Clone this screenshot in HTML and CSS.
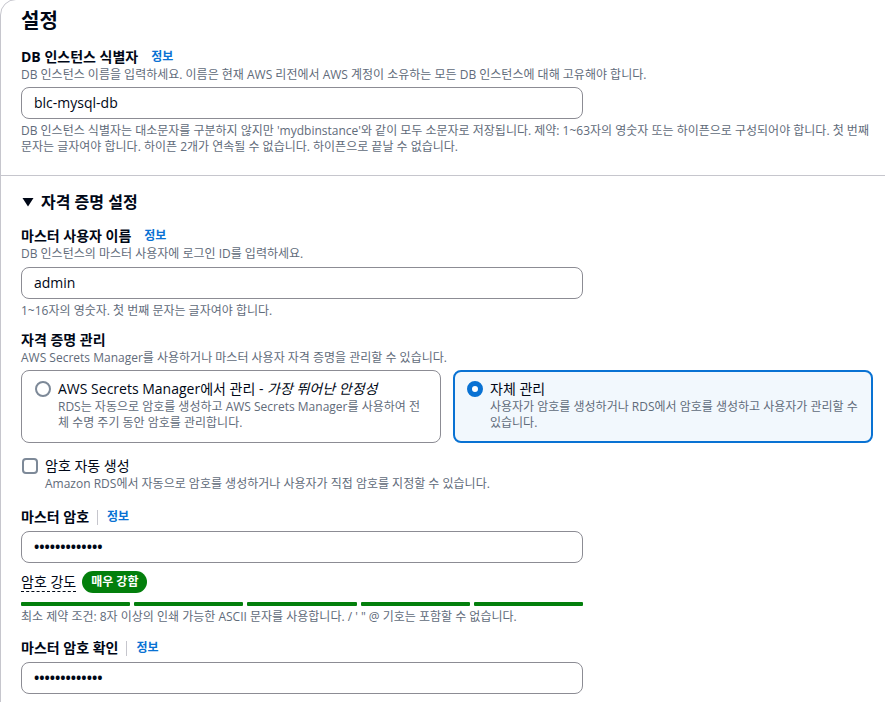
FILE: index.html
```html
<!DOCTYPE html>
<html lang="ko">
<head>
<meta charset="utf-8">
<title>설정</title>
<link rel="stylesheet" href="styles.css">
</head>
<body>
<div class="card">
  <section class="section first">
    <h2 class="title">설정</h2>
    <div class="field f-id">
      <div class="label-row"><span class="label">DB 인스턴스 식별자</span><a class="info spaced">정보</a></div>
      <div class="desc">DB 인스턴스 이름을 입력하세요. 이름은 현재 AWS 리전에서 AWS 계정이 소유하는 모든 DB 인스턴스에 대해 고유해야 합니다.</div>
      <div class="input">blc-mysql-db</div>
      <div class="hint">DB 인스턴스 식별자는 대소문자를 구분하지 않지만 'mydbinstance'와 같이 모두 소문자로 저장됩니다. 제약: 1~63자의 영숫자 또는 하이픈으로 구성되어야 합니다. 첫 번째 문자는 글자여야 합니다. 하이픈 2개가 연속될 수 없습니다. 하이픈으로 끝날 수 없습니다.</div>
    </div>
  </section>
  <section class="section second">
    <h3 class="subtitle"><svg class="caret" width="12" height="10" viewBox="0 0 12 10"><polygon points="0.5,1 11.5,1 6,9.5" fill="#000716"/></svg>자격 증명 설정</h3>
    <div class="field f-user">
      <div class="label-row"><span class="label">마스터 사용자 이름</span><a class="info spaced">정보</a></div>
      <div class="desc">DB 인스턴스의 마스터 사용자에 로그인 ID를 입력하세요.</div>
      <div class="input in-user">admin</div>
      <div class="hint">1~16자의 영숫자. 첫 번째 문자는 글자여야 합니다.</div>
    </div>
    <div class="field f-cred">
      <div class="label-row"><span class="label">자격 증명 관리</span></div>
      <div class="desc">AWS Secrets Manager를 사용하거나 마스터 사용자 자격 증명을 관리할 수 있습니다.</div>
      <div class="tiles">
        <div class="tile">
          <span class="radio"></span>
          <div class="tile-body">
            <div class="tile-title">AWS Secrets Manager에서 관리 - <em>가장 뛰어난 안정성</em></div>
            <div class="tile-desc">RDS는 자동으로 암호를 생성하고 AWS Secrets Manager를 사용하여 전체 수명 주기 동안 암호를 관리합니다.</div>
          </div>
        </div>
        <div class="tile selected">
          <span class="radio checked"></span>
          <div class="tile-body">
            <div class="tile-title">자체 관리</div>
            <div class="tile-desc">사용자가 암호를 생성하거나 RDS에서 암호를 생성하고 사용자가 관리할 수 있습니다.</div>
          </div>
        </div>
      </div>
    </div>
    <div class="check-row">
      <span class="checkbox"></span>
      <div>
        <div class="check-label">암호 자동 생성</div>
        <div class="desc">Amazon RDS에서 자동으로 암호를 생성하거나 사용자가 직접 암호를 지정할 수 있습니다.</div>
      </div>
    </div>
    <div class="field f-pw">
      <div class="label-row"><span class="label">마스터 암호</span><span class="sep"></span><a class="info">정보</a></div>
      <div class="input dots">•••••••••••••</div>
      <div class="strength">
        <span class="strength-label">암호 강도</span>
        <span class="badge">매우 강함</span>
      </div>
      <div class="bars"><span></span><span></span><span></span><span></span><span></span></div>
      <div class="hint tight">최소 제약 조건: 8자 이상의 인쇄 가능한 ASCII 문자를 사용합니다. / ' " @ 기호는 포함할 수 없습니다.</div>
    </div>
    <div class="field f-pw2">
      <div class="label-row"><span class="label">마스터 암호 확인</span><span class="sep"></span><a class="info">정보</a></div>
      <div class="input dots">•••••••••••••</div>
    </div>
  </section>
</div>
</body>
</html>
```

FILE: styles.css
```css
html, body {
  margin: 0;
  padding: 0;
  overflow: hidden;
  background: #ffffff;
}

body {
  font-family: "Open Sans", "Noto Sans CJK KR", sans-serif;
  color: #000716;
  font-size: 14px;
  line-height: 20px;
}

.card {
  width: 1000px;
  margin-top: -1px;
  border: 1px solid #c6c6cd;
  border-radius: 16px;
  background: #ffffff;
}

.section {
  padding: 0 20px;
}

.section.first {
  padding-top: 9px;
  padding-bottom: 20px;
}

.section.second {
  border-top: 1px solid #c6c6cd;
  padding-top: 14px;
  padding-bottom: 40px;
}

.title {
  margin: 0;
  font-size: 20px;
  line-height: 24px;
  font-weight: 700;
}

.subtitle {
  margin: 0;
  font-size: 16px;
  line-height: 24px;
  font-weight: 700;
  display: flex;
  align-items: center;
  gap: 7px;
  padding-left: 1px;
}

.caret {
  display: block;
}

.field {
  width: 562px;
}

.f-id { margin-top: 14px; }
.f-user { margin-top: 12px; }
.f-cred { margin-top: 11px; width: 852px; }
.f-pw { margin-top: 15px; }
.f-pw2 { margin-top: 13px; }

.label-row {
  display: flex;
  align-items: center;
  height: 20px;
}

.label {
  font-weight: 700;
  font-size: 14px;
}

.info {
  color: #0972d3;
  font-weight: 700;
  font-size: 12px;
  text-decoration: none;
}

.info.spaced {
  margin-left: 13px;
}

.sep {
  width: 1px;
  height: 15px;
  background: #c6c6cd;
  margin: 0 9px 0 8px;
}

.desc {
  font-size: 12px;
  line-height: 16px;
  color: #5f6b7a;
  white-space: nowrap;
}

.input {
  box-sizing: border-box;
  height: 32px;
  margin-top: 4px;
  border: 1px solid #8c8c94;
  border-radius: 8px;
  padding: 0 12px;
  font-size: 14px;
  line-height: 30px;
  color: #000716;
}

.in-user { margin-top: 5px; }

.dots {
  font-size: 14px;
  font-weight: 700;
  letter-spacing: 0;
}

.hint {
  margin-top: 4px;
  font-size: 12px;
  line-height: 16px;
  color: #5f6b7a;
}

.f-id .hint {
  width: 858px;
}

.hint.tight {
  margin-top: 3px;
  white-space: nowrap;
}

.tiles {
  margin-top: 4px;
  display: grid;
  grid-template-columns: 1fr 1fr;
  gap: 12px;
}

.tile {
  box-sizing: border-box;
  height: 73px;
  border: 1px solid #8c8c94;
  border-radius: 8px;
  padding: 8px 20px 8px 13px;
  display: flex;
  gap: 7px;
  align-items: flex-start;
}

.tile.selected {
  border: 2px solid #0972d3;
  background: #f2f8fd;
  padding: 7px 10px 7px 12px;
}

.radio {
  flex: none;
  box-sizing: border-box;
  width: 16px;
  height: 16px;
  margin-top: 2px;
  border-radius: 50%;
  border: 2px solid #7d8998;
  background: #ffffff;
}

.radio.checked {
  border: 5px solid #0972d3;
}

.tile-title {
  font-size: 14px;
  line-height: 20px;
}

.tile-title em {
  font-style: italic;
}

.tile-desc {
  font-size: 12px;
  line-height: 16px;
  color: #5f6b7a;
}

.check-row {
  margin-top: 13px;
  display: flex;
  gap: 7px;
  align-items: flex-start;
}

.checkbox {
  flex: none;
  box-sizing: border-box;
  width: 16px;
  height: 16px;
  margin: 2px 0 0 1px;
  border: 2px solid #7d8998;
  border-radius: 4px;
  background: #ffffff;
}

.check-label {
  font-size: 14px;
  line-height: 20px;
}

.strength {
  margin-top: 8px;
  display: flex;
  align-items: center;
  gap: 6px;
  height: 22px;
}

.strength-label {
  font-size: 14px;
  line-height: 18px;
  border-bottom: 1px dashed #000716;
}

.badge {
  background: #037f0c;
  color: #ffffff;
  font-size: 12px;
  font-weight: 700;
  line-height: 22px;
  height: 22px;
  padding: 0 9px;
  border-radius: 11px;
}

.bars {
  margin-top: 9px;
  display: grid;
  grid-template-columns: repeat(5, 1fr);
  gap: 4px;
}

.bars span {
  display: block;
  height: 4px;
  background: #037f0c;
  border-radius: 1px;
}
```
